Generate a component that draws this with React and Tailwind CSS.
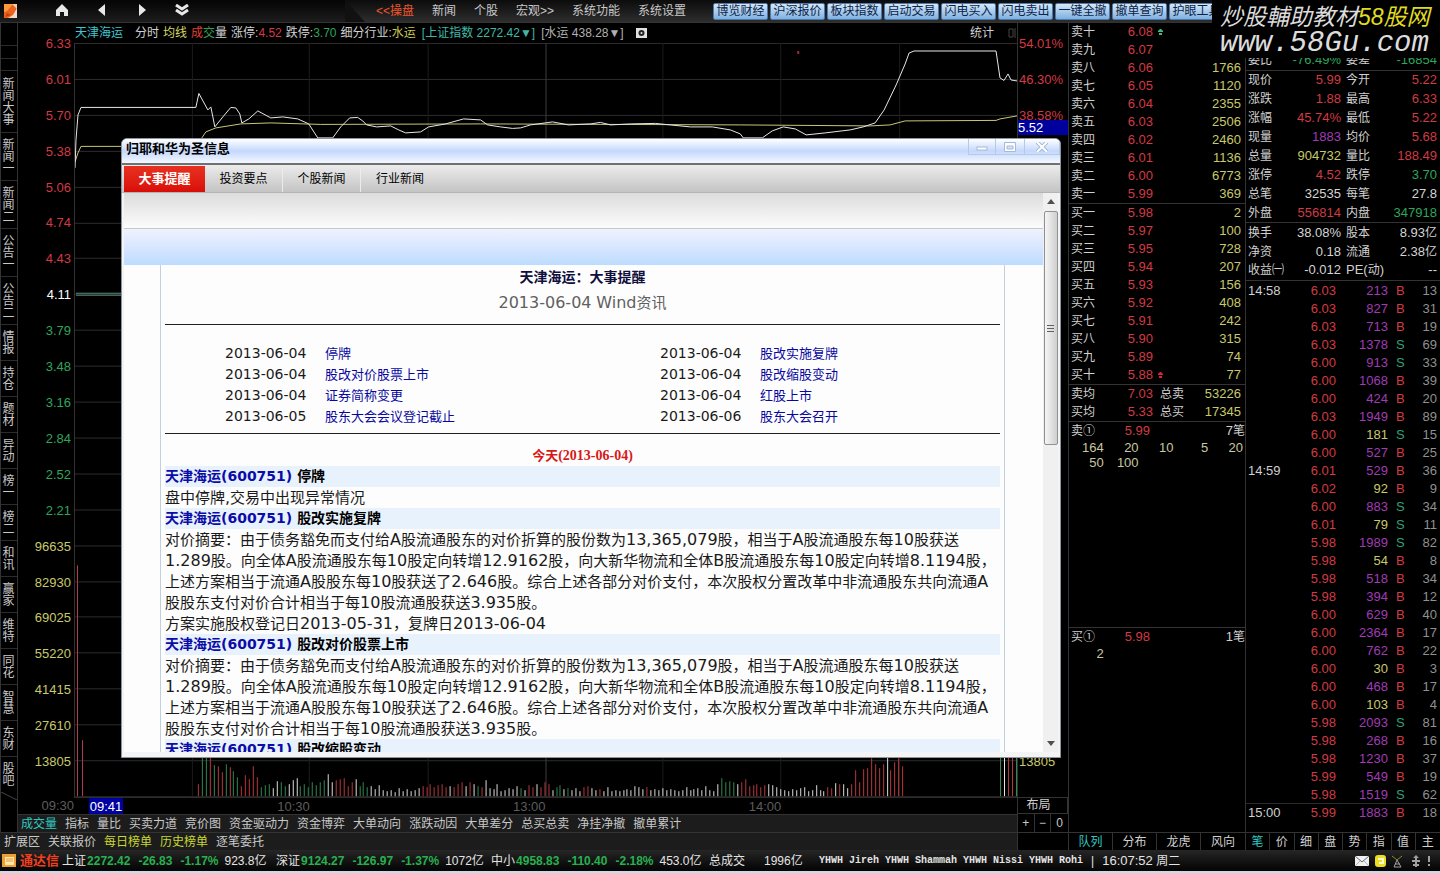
import React from 'react';
import { useState } from 'react';
import clsx from 'clsx';

const TOOL_BUTTONS = ['博览财经', '沪深报价', '板块指数', '启动交易', '闪电买入', '闪电卖出', '一键全撤', '撤单查询', '护眼工具'];

const SIDE_ITEMS = [
  '新闻大事', '新闻一', '新闻二', '公告一', '公告二', '情报', '持仓', '题材', '异动',
  '榜一', '榜二', '和讯', '赢家', '维特', '同花', '智慧', '东财', '股吧'
];

const SIDE_HEIGHTS = { 2: 'h-[36px]', 3: 'h-[48px]', 4: 'h-[62px]' };

const AXIS = [
  '6.33', '6.01', '5.70', '5.38', '5.06', '4.74', '4.43', '4.11', '3.79', '3.48', '3.16', '2.84', '2.52', '2.21',
  '96635', '82930', '69025', '55220', '41415', '27610', '13805'
];

const AXIS_RIGHT = { 0: '54.01%', 1: '46.30%', 2: '38.58%', 20: '13805' };

const INDICATORS = [
  '成交量', '指标', '量比', '买卖力道', '竞价图', '资金驱动力', '资金博弈', '大单动向',
  '涨跌动因', '大单差分', '总买总卖', '净挂净撤', '撤单累计'
];

const EXTRA_TABS = ['扩展区', '关联报价', '每日榜单', '历史榜单', '逐笔委托'];

const SELLS = [
  ['卖十', '6.08', ''], ['卖九', '6.07', ''], ['卖八', '6.06', '1766'], ['卖七', '6.05', '1120'], ['卖六', '6.04', '2355'],
  ['卖五', '6.03', '2506'], ['卖四', '6.02', '2460'], ['卖三', '6.01', '1136'], ['卖二', '6.00', '6773'], ['卖一', '5.99', '369']
];

const BUYS = [
  ['买一', '5.98', '2'], ['买二', '5.97', '100'], ['买三', '5.95', '728'], ['买四', '5.94', '207'], ['买五', '5.93', '156'],
  ['买六', '5.92', '408'], ['买七', '5.91', '242'], ['买八', '5.90', '315'], ['买九', '5.89', '74'], ['买十', '5.88', '77']
];

const RED = 'text-[#d23a44]';
const GREEN = 'text-[#2fa55c]';
const YELLOW = 'text-[#c9c96a]';
const WHITE = 'text-[#d4d4d4]';
const PURPLE = 'text-[#a03cb4]';

const QUOTES = [
  ['现价', '5.99', RED, '今开', '5.22', RED],
  ['涨跌', '1.88', RED, '最高', '6.33', RED],
  ['涨幅', '45.74%', RED, '最低', '5.22', RED],
  ['现量', '1883', PURPLE, '均价', '5.68', RED],
  ['总量', '904732', YELLOW, '量比', '188.49', RED],
  ['涨停', '4.52', RED, '跌停', '3.70', GREEN],
  ['总笔', '32535', WHITE, '每笔', '27.8', WHITE],
  ['外盘', '556814', RED, '内盘', '347918', GREEN]
];

const FUNDAMENTALS = [
  ['换手', '38.08%', WHITE, '股本', '8.93亿', WHITE],
  ['净资', '0.18', WHITE, '流通', '2.38亿', WHITE],
  ['收益㈠', '-0.012', WHITE, 'PE(动)', '--', WHITE]
];

const TICKS = [
  ['14:58', '6.03', 213, 'B', 13], ['', '6.03', 827, 'B', 31], ['', '6.03', 713, 'B', 19], ['', '6.03', 1378, 'S', 69],
  ['', '6.00', 913, 'S', 33], ['', '6.00', 1068, 'B', 39], ['', '6.00', 424, 'B', 20], ['', '6.03', 1949, 'B', 89],
  ['', '6.00', 181, 'S', 15], ['', '6.00', 527, 'B', 25], ['14:59', '6.01', 529, 'B', 36], ['', '6.02', 92, 'B', 9],
  ['', '6.00', 883, 'S', 34], ['', '6.01', 79, 'S', 11], ['', '5.98', 1989, 'S', 82], ['', '5.98', 54, 'B', 8],
  ['', '5.98', 518, 'B', 34], ['', '5.98', 394, 'B', 12], ['', '6.00', 629, 'B', 40], ['', '6.00', 2364, 'B', 17],
  ['', '6.00', 762, 'B', 22], ['', '6.00', 30, 'B', 3], ['', '6.00', 468, 'B', 17], ['', '6.00', 103, 'B', 4],
  ['', '5.98', 2093, 'S', 81], ['', '5.98', 268, 'B', 16], ['', '5.98', 1230, 'B', 37], ['', '5.99', 549, 'B', 19],
  ['', '5.98', 1519, 'S', 62], ['15:00', '5.99', 1883, 'B', 18]
];

// Volume bars, one per minute: colour letter + height
const VOLUME = (
  'r12 g40 g44 r42 g31 r30 r24 g32 r29 g25 g19 r10 r21 r17 r30 r19 g9 g11 g12 w8 w15 g14 g10 w12 w16 w18 g10 g12 g9 g14 g11 g14 g16 w22 w14 r16 r17 r18 r10 r14 w17 g10 g14 g9 w10 w7 ' +
  'w11 w6 w5 w6 w4 w8 w5 w7 w5 w6 w8 r10 r9 r12 r9 r11 r12 r9 w10 r9 r12 r14 w10 r14 w12 g10 r9 w16 w8 w7 w12 w5 w6 w8 w7 w10 g8 w6 r11 r9 w12 r9 r14 r12 w6 g9 g11 ' +
  'w7 g8 w6 w8 w5 r9 r10 w8 w6 r7 w5 w9 w5 w6 w5 w6 w7 w6 w10 w9 w7 r9 w6 w7 w6 w8 w6 w7 w6 w5 w6 w9 w6 w7 w8 w6 w10 w6 w5 w12 g18 g14 g15 g14 w12 r14 r17 r10 ' +
  'r11 r12 r9 r11 w12 w11 w9 w7 w6 w5 w7 w6 w8 w9 w5 w6 w11 w6 w5 r9 r8 w13 r12 w12 w8 r12 r26 r14 r27 r28 r38 r32 r28 r32 w40 r26 r34 r38 r30'
).split(' ');

const BAR_COLORS = { r: '#b8383c', g: '#2f8a52', w: '#dcdcdc' };

const EVENTS = [
  ['2013-06-04', '停牌', '2013-06-04', '股改实施复牌'],
  ['2013-06-04', '股改对价股票上市', '2013-06-04', '股改缩股变动'],
  ['2013-06-04', '证券简称变更', '2013-06-04', '红股上市'],
  ['2013-06-05', '股东大会会议登记截止', '2013-06-06', '股东大会召开']
];

const SUMMARY = [
  '对价摘要：由于债务豁免而支付给A股流通股东的对价折算的股份数为13,365,079股，相当于A股流通股东每10股获送',
  '1.289股。向全体A股流通股东每10股定向转增12.9162股，向大新华物流和全体B股流通股东每10股定向转增8.1194股，',
  '上述方案相当于流通A股股东每10股获送了2.646股。综合上述各部分对价支付，本次股权分置改革中非流通股东共向流通A',
  '股股东支付对价合计相当于每10股流通股获送3.935股。'
];

const ARTICLES = [
  { title: '停牌', lines: ['盘中停牌,交易中出现异常情况'] },
  { title: '股改实施复牌', lines: [...SUMMARY, '方案实施股权登记日2013-05-31，复牌日2013-06-04'] },
  { title: '股改对价股票上市', lines: SUMMARY },
  { title: '股改缩股变动', lines: [] }
];

// Latin runs are set one pixel larger than the Chinese around them
function Mix({ text, className = 'text-[13px] leading-none' }) {
  return text.split(/([\x21-\x7e]+)/).map((part, i) =>
    i % 2 ? <span key={i} className={className}>{part}</span> : part
  );
}

function Header() {
  return (
    <header className="flex h-[23px] items-center border-b border-[#333] bg-gradient-to-b from-[#0c0c0c] to-[#2e2e2e] text-[#c8c8c8]">
      <div className="flex h-full w-[345px] shrink-0 items-center bg-gradient-to-b from-[#050505] to-[#1d1d1d]">
        <svg className="ml-1 h-4 w-4" viewBox="0 0 16 16">
          <rect x="0" y="1" width="13" height="14" fill="#e8641c" />
          <path d="M0 1H9L3 8L0 9Z" fill="#ff9a3c" />
          <path d="M8 1H13V6Z" fill="#f8c8a8" />
          <path d="M13 5V15H4L9 12Z" fill="#f4d8cc" />
          <path d="M1 14L3 10L7 12Z" fill="#c83c10" />
        </svg>
        <div className="flex items-center pl-[28px]">
          <button className="flex h-[22px] w-[28px] items-center justify-center" aria-label="首页">
            <svg className="h-[14px] w-[14px]" viewBox="0 0 14 14" fill="#e8e8e8"><path d="M7 0L13 6V12H9V8H5V12H1V6Z" /></svg>
          </button>
          <button className="ml-3 flex h-[22px] w-[28px] items-center justify-center" aria-label="后退">
            <svg className="h-[14px] w-[10px]" viewBox="0 0 10 14" fill="#e8e8e8"><path d="M8 0V12L1 6Z" /></svg>
          </button>
          <button className="ml-3 flex h-[22px] w-[28px] items-center justify-center" aria-label="前进">
            <svg className="h-[14px] w-[10px]" viewBox="0 0 10 14" fill="#e8e8e8"><path d="M2 0V12L9 6Z" /></svg>
          </button>
          <button className="ml-3 flex h-[22px] w-[28px] items-center justify-center" aria-label="更多">
            <svg className="h-[14px] w-[16px]" viewBox="0 0 16 14" fill="none" stroke="#e8e8e8" strokeWidth="3"><path d="M2 1L8 5L14 1M2 6L8 10L14 6" /></svg>
          </button>
        </div>
      </div>
      <svg className="h-[22px] w-[20px] shrink-0" viewBox="0 0 20 22" preserveAspectRatio="none">
        <path d="M0 0L20 22H0Z" fill="#111" />
      </svg>
      <nav className="flex shrink-0 items-center gap-[18px] pl-[11px] whitespace-nowrap">
        <button className="text-[#f0552c]">&lt;&lt;操盘</button>
        <button>新闻</button>
        <button>个股</button>
        <button>宏观&gt;&gt;</button>
        <button>系统功能</button>
        <button>系统设置</button>
      </nav>
      <div className="ml-[27px] flex min-w-0 flex-1 gap-[2px] overflow-hidden pr-[228px]">
        {TOOL_BUTTONS.map(name => (
          <button
            key={name}
            className="h-[17px] w-[55px] shrink-0 rounded-[2px] border border-[#4c7ab0] bg-gradient-to-b from-[#d4e8fa] to-[#7fb0de] leading-[15px] text-[#0c2348]"
          >
            {name}
          </button>
        ))}
      </div>
    </header>
  );
}

function Watermark() {
  return (
    <div className="absolute top-0 right-0 h-[58px] w-[228px] bg-black pl-2 whitespace-nowrap text-[#dcdcdc] italic">
      <div className="pt-[5px] text-[23px] leading-[25px]">
        炒股輔助教材<span className="text-[#e0dc20]">58股网</span>
      </div>
      <div className="font-['Liberation_Mono',monospace] text-[29px] leading-[28px]">www.58Gu.com</div>
    </div>
  );
}

function SideBar() {
  return (
    <nav className="flex w-[18px] shrink-0 flex-col border-r border-l border-[#333] pt-[22px] text-[#c8c8c8]">
      <div className="h-[13px] border-t border-[#2c2c2c]" />
      <div className="h-[12px] border-t border-[#2c2c2c]" />
      {SIDE_ITEMS.map(item => (
        <button
          key={item}
          className={clsx('flex w-full items-center justify-center border-t border-[#2c2c2c] pr-px', SIDE_HEIGHTS[item.length])}
        >
          <span className="w-3 leading-[12px] break-all">{item}</span>
        </button>
      ))}
      <svg className="h-2 w-full" viewBox="0 0 16 8" fill="none" stroke="#444"><path d="M0 0L16 8" /></svg>
    </nav>
  );
}

function axisColor(index) {
  if (index < 7) return RED;
  if (index === 7) return 'text-white';
  return index < 14 ? GREEN : YELLOW;
}

function PriceChart() {
  const rows = Array.from({ length: 22 }, (_, i) => Math.round(i * 35.9) + 0.5);
  const cols = [117.5, 234.5, 353.5, 471.5, 588.5, 706.5, 825.5];

  return (
    <svg className="min-h-0 w-full flex-1 border-l border-[#333]" viewBox="74 43 943 755" preserveAspectRatio="none" fill="none">
      {rows.map(y => <path key={y} d={`M74 ${43 + y}H1017`} stroke="#2c2c2c" />)}
      {cols.map(x => <path key={x} d={`M${74 + x} 43V797`} stroke={x === 471.5 ? '#3c3c3c' : '#1c1c1c'} />)}
      <path
        stroke="#c8c878"
        d="M74 162L77 153L80 146.500H125M201 138L205 132L215 128L240 124L270 123L320 124.500L480 124L740 125L870 126L890 125L905 121L996 120.500L1000 119L1017 116"
      />
      <path
        stroke="#e8e8e8"
        d="M74 168L75 140L77 115L80 107.500H195L198 93.500L207 110L210 107L214 127L222 117L230 107.500L235 108L239 114L241 123L248 119L257 111L270 118L282 117L297 119L308 124L317 138H332L340 127L349 118L357 117.500L362 121L366 125L376 127L390 126L398 130L405 133L420 132L428 127L445 124L463 119L480 120L487 125L500 127L512 128.500L520 128L530 125L552 122L568 125L590 124L600 122.500L610 125L630 124L655 123.500L670 125L690 127L712 127L730 130L740 134L743 138H762L772 131L783 127L795 129L806 135L825 133L850 130L863 127L875 123L884 110L896 85L905 64L909 53L914 51H996L1000 78L1004 80.500L1008 74L1011 80L1017 81"
      />
      <path stroke="#5a8c80" d="M75 293.500H125M75 295.500H125" />
      <path stroke="#b83c50" d="M76.500 566V797M81.500 741V797" />
      {VOLUME.map((bar, i) => (
        <path
          key={i}
          stroke={BAR_COLORS[bar[0]]}
          d={`M${Math.round(197 + i * 3.94) + 0.5} 797V${797 - Number(bar.slice(1))}`}
        />
      ))}
      <path stroke="#2f8a52" d="M1000.500 755V797M1016.500 755V797" />
      <path stroke="#e8e8e8" d="M1004.500 755V797" />
      <path stroke="#b8383c" d="M1008.500 755V797M1012.500 755V797" />
      <rect x="797" y="51" width="2" height="3" fill="#a02838" />
    </svg>
  );
}

function ChartInfo() {
  return (
    <div className="flex h-[20px] shrink-0 items-center pl-px whitespace-nowrap text-[#d0d0d0]">
      <span className="text-[#40c4d0]">天津海运</span>
      <span className="ml-3">分时</span>
      <span className="ml-1 text-[#d8d860]">均线</span>
      <span className="ml-1"><span className="text-[#e04030]">成</span><span className="text-[#30a050]">交</span>量</span>
      <span className="ml-1">涨停:<span className={RED}>4.52</span></span>
      <span className="ml-1">跌停:<span className={GREEN}>3.70</span></span>
      <span className="ml-1">细分行业:<span className="text-[#c8c850]">水运</span></span>
      <span className="ml-[6px] text-[#3fb8a8]">[上证指数 2272.42▼]</span>
      <span className="ml-[6px] text-[#b0b0b0]">[水运 438.28▼]</span>
      <svg className="ml-3 h-[10px] w-[11px]" viewBox="0 0 11 10">
        <rect width="11" height="10" fill="#e0e0e0" />
        <circle cx="5.500" cy="5" r="3" fill="#222" />
        <circle cx="5.500" cy="5" r="1" fill="#e0e0e0" />
      </svg>
      <span className="mr-[14px] ml-auto">统计</span>
      <svg className="mr-[1px] h-3 w-2" viewBox="0 0 8 12" fill="none" stroke="#444"><path d="M1 2H5V10H1ZM7 1V11" /></svg>
    </div>
  );
}

function ChartArea() {
  return (
    <div className="flex min-w-0 flex-1 flex-col">
      <div className="flex min-h-0 flex-1">
        <div className="flex w-[56px] shrink-0 flex-col pt-[3px] pb-[17px] text-right text-[13px]">
          {AXIS.map((label, i) => (
            <div key={label} className={clsx('flex flex-1 items-center justify-end pr-[3px]', axisColor(i))}>{label}</div>
          ))}
        </div>
        <div className="flex min-w-0 flex-1 flex-col">
          <ChartInfo />
          <PriceChart />
        </div>
        <div className="relative flex w-[51px] shrink-0 flex-col border-l border-[#333] pt-[3px] pb-[17px] text-[13px]">
          {AXIS.map((label, i) => (
            <div key={label} className={clsx('flex flex-1 items-center pl-px', i < 3 ? RED : YELLOW)}>{AXIS_RIGHT[i]}</div>
          ))}
          <div className="absolute top-[97px] right-0 left-0 h-[15px] bg-[#00009c] leading-[15px] text-white">5.52</div>
        </div>
      </div>
      <div className="flex h-[17px] shrink-0 text-[13px] leading-[17px] text-[#5c5c5c]">
        <div className="w-[56px] shrink-0 text-right">09:30</div>
        <div className="grid flex-1 grid-cols-8 border-t border-[#2c2c2c] text-right">
          <div className="ml-[15px] w-[34px] justify-self-start bg-[#0000a0] text-center text-white">09:41</div>
          <div>10:30</div>
          <div />
          <div>13:00</div>
          <div />
          <div>14:00</div>
        </div>
        <button className="w-[51px] shrink-0 border border-[#333] pr-2 text-center text-[12px] leading-[15px] text-[#d0d0d0]">布局</button>
      </div>
      <div className="flex h-[18px] shrink-0 text-[#c8c8c8]">
        <div className="flex min-w-0 flex-1 items-center gap-2 overflow-hidden border-t border-[#333] bg-[#1c1c1c] pl-[3px] whitespace-nowrap">
          {INDICATORS.map((name, i) => (
            <button key={name} className={clsx(i === 0 && 'text-[#30c8c0]')}>{name}</button>
          ))}
        </div>
        <div className="grid w-[51px] shrink-0 grid-cols-3 divide-x divide-[#333] border-l border-[#333] text-center leading-[18px]">
          <button aria-label="放大">+</button>
          <button aria-label="缩小">−</button>
          <button>0</button>
        </div>
      </div>
    </div>
  );
}

function NewsDialog() {
  const tabs = ['大事提醒', '投资要点', '个股新闻', '行业新闻'];
  const [active, setActive] = useState(tabs[0]);

  return (
    <section className="absolute top-[115px] right-[7px] bottom-[92px] left-[121px] flex flex-col overflow-hidden rounded-t-[6px] border border-[#8c94a0] bg-[#f4f4f4] text-black">
      <div className="flex h-[26px] shrink-0 items-start border-b-2 border-[#707070] bg-gradient-to-b from-white via-[#c4d8fc] to-[#f4f8ff] pl-1">
        <h1 className="text-[13px] leading-[20px] font-bold">归耶和华为圣信息</h1>
        <div className="ml-auto flex h-[16px] divide-x divide-[#b4c8e8] border-x border-b border-[#b4c8e8] text-[#fff]">
          <button className="flex w-[27px] items-center justify-center" aria-label="最小化">
            <svg className="h-2 w-3" viewBox="0 0 12 8"><rect x="1" y="4" width="10" height="3" fill="#fff" stroke="#a4b8d8" /></svg>
          </button>
          <button className="flex w-[29px] items-center justify-center" aria-label="最大化">
            <svg className="h-[10px] w-3" viewBox="0 0 12 10"><path d="M0.500 0.500H11.500V9.500H0.500ZM3 4H9V7H3Z" fill="#fff" fillRule="evenodd" stroke="#a4b8d8" /></svg>
          </button>
          <button className="flex w-[34px] items-center justify-center" aria-label="关闭">
            <svg className="h-[10px] w-3" viewBox="0 0 12 10" fill="none">
              <path d="M1 0L11 10M11 0L1 10" stroke="#a4b8d8" strokeWidth="4" />
              <path d="M1 0L11 10M11 0L1 10" stroke="#fff" strokeWidth="2" />
            </svg>
          </button>
        </div>
      </div>
      <div className="flex h-[28px] shrink-0 items-stretch border-b border-[#b4b4b4] bg-gradient-to-b from-[#ececec] to-[#c4c4c4] pt-px pl-[2px]">
        {tabs.map((tab, i) => (
          <button
            key={tab}
            onClick={() => setActive(tab)}
            className={clsx(
              'text-[12px] leading-[26px]',
              i === 0 ? 'w-[81px]' : 'w-[78px] border-r border-[#ececec] last:border-r-0',
              tab === active && 'bg-gradient-to-b from-[#e83020] to-[#d80c08] text-[13px] font-bold text-white'
            )}
          >
            {tab}
          </button>
        ))}
      </div>
      <div className="mx-[2px] mb-[5px] flex min-h-0 flex-1 bg-[#fdfdfd]">
        <div className="flex min-w-0 flex-1 flex-col overflow-hidden">
          <div className="h-[36px] shrink-0 border-b border-[#c8c8c8] bg-gradient-to-b from-[#dcdcdc] to-[#fcfcfc]" />
          <div className="h-[36px] shrink-0 bg-gradient-to-b from-[#f0f2ff] via-[#d8e6ff] to-[#bcdcff]" />
          <div className="mr-[38px] ml-[36px] border-x border-[#c0d0e0] px-1 font-['DejaVu_Sans','Noto_Sans_CJK_SC',sans-serif] text-[15px] whitespace-nowrap">
            <h2 className="pt-[2px] text-center text-[14px] leading-[21px] font-bold text-[#10103c]">天津海运：大事提醒</h2>
            <p className="h-[36px] pt-1 text-center leading-[22px] text-[#606060]">
              <Mix text="2013-06-04 Wind资讯" className="text-[16px]" />
            </p>
            <div className="border-y border-[#202020] pt-[18px] pb-[6px]">
              <table className="w-full table-fixed text-[13px] leading-[21px] text-[#1a1a1a]">
                <tbody>
                  {EVENTS.map(([dateA, textA, dateB, textB]) => (
                    <tr key={textA}>
                      <td className="w-[160px] pl-[60px] text-[14px]">{dateA}</td>
                      <td><a href="#" className="text-[#0808a0]">{textA}</a></td>
                      <td className="w-[100px] text-[14px]">{dateB}</td>
                      <td className="w-[240px]"><a href="#" className="text-[#0808a0]">{textB}</a></td>
                    </tr>
                  ))}
                </tbody>
              </table>
            </div>
            <p className="pt-3 text-center font-['Liberation_Serif','Noto_Sans_CJK_SC',serif] text-[13px] leading-[20px] font-bold text-[#d81818]">
              <Mix text="今天(2013-06-04)" className="text-[14px]" />
            </p>
            {ARTICLES.map(article => (
              <div key={article.title} className="leading-[21px]">
                <h3 className="bg-[#e8f2fc] text-[14px] leading-[21px] font-bold">
                  <a href="#" className="text-[#0c0ca8]">天津海运(600751)</a> {article.title}
                </h3>
                {article.lines.map(line => (
                  <p key={line} className="h-[21px] text-[#1a1a1a]"><Mix text={line} className="text-[16px]" /></p>
                ))}
              </div>
            ))}
          </div>
        </div>
        <div className="flex w-[15px] shrink-0 flex-col items-center bg-[#f0f0f0]">
          <svg className="h-[18px] w-2" viewBox="0 0 8 18"><path d="M0 11L4 6L8 11Z" fill="#505050" /></svg>
          <div className="flex h-[234px] w-[14px] items-center justify-center rounded-[2px] border border-[#909090] bg-gradient-to-r from-[#f6f6f6] to-[#cfcfcf]">
            <svg className="h-2 w-[7px]" viewBox="0 0 7 8" stroke="#606060"><path d="M0 1.500H7M0 4.500H7M0 7.500H7" /></svg>
          </div>
          <svg className="mt-auto h-[18px] w-2" viewBox="0 0 8 18"><path d="M0 7L4 12L8 7Z" fill="#505050" /></svg>
        </div>
      </div>
    </section>
  );
}

function DepthTable({ rows, mark, markClass }) {
  return (
    <table className="w-full table-fixed leading-[18px]">
      <tbody>
        {rows.map(([label, price, volume]) => (
          <tr key={label} className="h-[18px]">
            <td className="w-[40px] pl-[2px]">{label}</td>
            <td className={clsx('w-[44px] text-right text-[13px]', RED)}>{price}</td>
            <td className="pl-[5px]">
              {label === mark && (
                <svg className={clsx('h-[6px] w-[5px]', markClass)} viewBox="0 0 5 6" fill="currentColor"><path d="M2 0H3L5 2V3H0V2ZM1 4H4V6H1Z" /></svg>
              )}
            </td>
            <td className={clsx('w-[60px] pr-1 text-right text-[13px]', YELLOW)}>{volume}</td>
          </tr>
        ))}
      </tbody>
    </table>
  );
}

function QueueBlock({ label, price, count, orders }) {
  return (
    <div className="min-h-0 flex-1 border-t border-[#333]">
      <div className="flex h-[18px] items-center pl-[2px]">
        <span className="w-[38px]">{label}</span>
        <span className={clsx('w-[41px] text-right text-[13px]', RED)}>{price}</span>
        <span className="ml-auto"><Mix text={count} /></span>
      </div>
      <div className="grid grid-cols-5 pr-[2px] text-right text-[13px] leading-[15px] text-[#c8c8a0]">
        {orders.map((order, i) => <span key={i}>{order}</span>)}
      </div>
    </div>
  );
}

function OrderBook() {
  return (
    <aside className="flex w-[178px] shrink-0 flex-col border-x border-[#333] text-[#d0d0d0]">
      <DepthTable rows={SELLS} mark="卖十" markClass="text-[#40b880]" />
      <div className="border-t border-[#333]">
        <DepthTable rows={BUYS} mark="买十" markClass="text-[#d02840]" />
      </div>
      <table className="w-full table-fixed border-t border-[#333] leading-[18px]">
        <tbody>
          {[['卖均', '7.03', '总卖', '53226'], ['买均', '5.33', '总买', '17345']].map(([a, b, c, d]) => (
            <tr key={a} className="h-[18px]">
              <td className="w-[40px] pl-[2px]">{a}</td>
              <td className={clsx('w-[44px] text-right text-[13px]', RED)}>{b}</td>
              <td className="pl-[7px]">{c}</td>
              <td className={clsx('w-[60px] pr-1 text-right text-[13px]', YELLOW)}>{d}</td>
            </tr>
          ))}
        </tbody>
      </table>
      <QueueBlock label="卖①" price="5.99" count="7笔" orders={[164, 20, 10, 5, 20, 50, 100]} />
      <QueueBlock label="买①" price="5.98" count="1笔" orders={[2]} />
      <div className="grid h-[18px] shrink-0 grid-cols-4 divide-x divide-[#333] border-t border-[#333]">
        {['队列', '分布', '龙虎', '风向'].map((name, i) => (
          <button key={name} className={clsx('leading-[18px]', i === 0 && 'text-[#30c8c0]')}>{name}</button>
        ))}
      </div>
    </aside>
  );
}

function QuoteTable({ rows }) {
  return (
    <table className="w-full table-fixed border-b border-[#333] leading-[18px]">
      <tbody>
        {rows.map(([a, av, ac, b, bv, bc]) => (
          <tr key={a} className="h-[19px]">
            <td className="w-[40px] pl-[2px] whitespace-nowrap">{a}</td>
            <td className={clsx('text-right', ac)}><Mix text={av} /></td>
            <td className="w-[44px] pl-[5px] whitespace-nowrap"><Mix text={b} /></td>
            <td className={clsx('pr-[3px] text-right', bc)}><Mix text={bv} /></td>
          </tr>
        ))}
      </tbody>
    </table>
  );
}

function QuotePanel() {
  return (
    <aside className="flex w-[194px] shrink-0 flex-col pt-[28px] text-[#d0d0d0]">
      <QuoteTable rows={[['委比', '-76.49%', GREEN, '委差', '-16854', GREEN]]} />
      <QuoteTable rows={QUOTES} />
      <QuoteTable rows={FUNDAMENTALS} />
      <table className="mt-px mb-[8px] w-full table-fixed text-[13px] leading-[18px]">
        <tbody>
          {TICKS.map(([time, price, volume, side, count], i) => (
            <tr key={i} className={clsx('h-[18px]', time === '15:00' && 'shadow-[0_-1px_0_#2a2a2a]')}>
              <td className="w-[50px] pl-[2px]">{time}</td>
              <td className={clsx('text-right', RED)}>{price}</td>
              <td className={clsx('w-[52px] text-right', volume >= 200 ? PURPLE : YELLOW)}>{volume}</td>
              <td className={clsx('w-[22px] pl-2', side === 'B' ? RED : 'text-[#2fa07c]')}>{side}</td>
              <td className="w-[30px] pr-[3px] text-right text-[#909090]">{count}</td>
            </tr>
          ))}
        </tbody>
      </table>
      <div className="mt-auto grid h-[18px] grid-cols-8 divide-x divide-[#333] border-t border-[#333]">
        {['笔', '价', '细', '盘', '势', '指', '值', '主'].map((name, i) => (
          <button key={name} className={clsx('leading-[18px]', i === 0 && 'text-[#30c8c0]')}>{name}</button>
        ))}
      </div>
    </aside>
  );
}

function IndexQuote({ name, value, change, percent, amount, className }) {
  return (
    <div className={clsx('flex items-center', className)}>
      <span>{name}</span>
      <span className="ml-px flex gap-2 font-bold text-[#28b050]">
        <span>{value}</span>
        <span>{change}</span>
        <span>{percent}</span>
      </span>
      <span className="ml-[6px]">{amount}</span>
    </div>
  );
}

function StatusBar() {
  return (
    <footer className="flex h-[23px] shrink-0 items-center overflow-hidden border-b-2 border-[#c8dce8] bg-gradient-to-b from-[#262626] to-[#050505] whitespace-nowrap text-[#e4e4e4]">
      <svg className="ml-[2px] h-[13px] w-[14px] shrink-0" viewBox="0 0 14 13">
        <rect width="14" height="13" fill="#f0a030" />
        <rect x="3" y="3" width="9" height="8" fill="#fde8b0" />
        <path d="M4 5H11M4 7H11" stroke="#e0a040" />
      </svg>
      <span className="ml-1 text-[13px] font-bold text-[#f04020]">通达信</span>
      <IndexQuote className="ml-[3px] w-[214px]" name="上证" value="2272.42" change="-26.83" percent="-1.17%" amount="923.8亿" />
      <IndexQuote className="w-[215px]" name="深证" value="9124.27" change="-126.97" percent="-1.37%" amount="1072亿" />
      <IndexQuote className="w-[218px]" name="中小" value="4958.83" change="-110.40" percent="-2.18%" amount="453.0亿" />
      <span className="w-[55px]">总成交</span>
      <span className="w-[55px]">1996亿</span>
      <span className="font-['Liberation_Mono',monospace] text-[10px] font-bold">YHWH Jireh YHWH Shammah YHWH Nissi YHWH Rohi</span>
      <span className="ml-2">|</span>
      <span className="ml-2"><Mix text="16:07:52 周二" /></span>
      <svg className="mr-1 ml-auto h-[14px] w-[82px] shrink-0" viewBox="0 0 82 14" fill="none">
        <rect x="1" y="2" width="14" height="10" fill="#f0f0f0" />
        <path d="M1 2L8 8L15 2" stroke="#606878" />
        <path d="M1 12L6 7M15 12L10 7" stroke="#b0b4c0" />
        <rect x="21" y="1" width="11" height="12" rx="3" fill="#f0dc20" />
        <path d="M24 5H29V9H25" stroke="#fffbd0" strokeWidth="2" />
        <path d="M38 2L43 6L48 2" stroke="#908830" />
        <path d="M43 6L40 13H47L43 6M41 10H46" stroke="#a0a0a0" />
        <path d="M62 1L65 4H59ZM58 6H66V8H58ZM61 4H63V13H61ZM59 10H65V12H59Z" fill="#a0a0a0" />
        <path d="M75 2V8M75 10V12" stroke="#a0a0a0" strokeWidth="2" />
      </svg>
    </footer>
  );
}

function App() {
  return (
    <div className="relative flex min-h-screen flex-col overflow-hidden bg-black font-['Liberation_Sans','Noto_Sans_CJK_SC',sans-serif] text-[12px] leading-[18px]">
      <Header />
      <main className="flex min-h-0 flex-1">
        <div className="relative flex min-w-0 flex-1 flex-col">
          <div className="flex min-h-0 flex-1">
            <SideBar />
            <ChartArea />
          </div>
          <div className="flex h-[18px] shrink-0">
            <div className="flex flex-1 items-center gap-2 border-t border-[#333] bg-[#1c1c1c] pl-1 text-[#c8c8c8]">
              {EXTRA_TABS.map(name => (
                <button key={name} className={clsx(name.endsWith('榜单') && 'text-[#c8d830]')}>{name}</button>
              ))}
            </div>
            <div className="w-[51px] shrink-0 border-t border-l border-[#333]" />
          </div>
          <NewsDialog />
        </div>
        <OrderBook />
        <QuotePanel />
      </main>
      <StatusBar />
      <Watermark />
    </div>
  );
}

export default App;
